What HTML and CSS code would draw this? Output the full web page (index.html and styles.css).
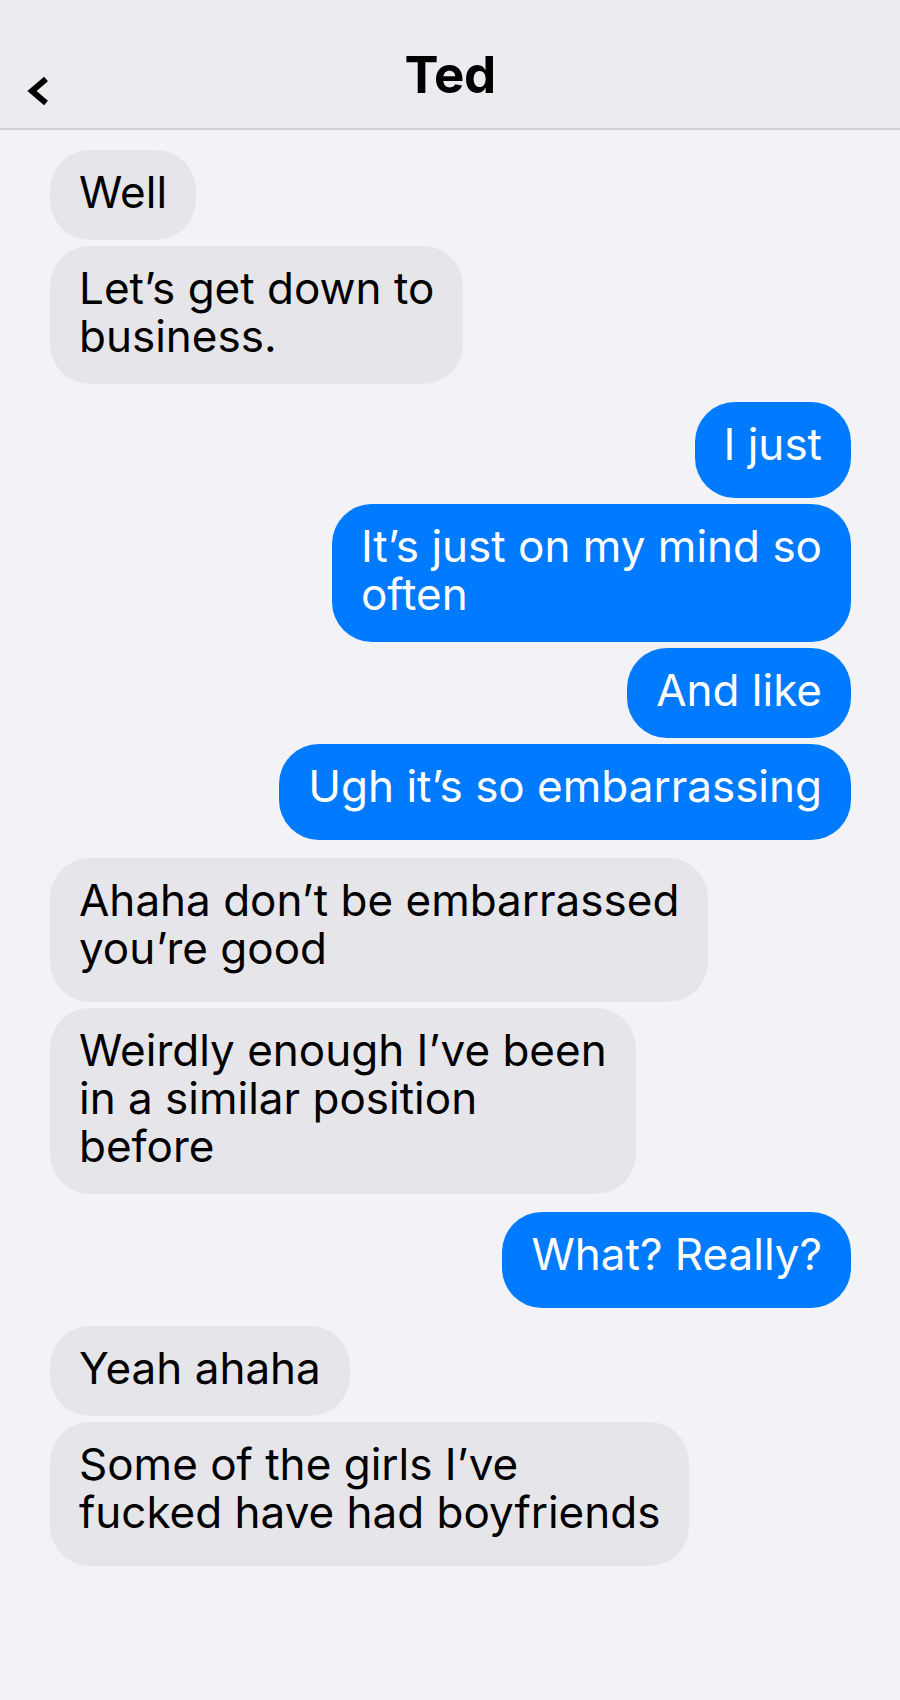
FILE: index.html
```html
<!DOCTYPE html>
<html lang='en'>

<head>
    <meta charset='UTF-8' />
    <meta name='viewport' content='width=device-width, initial-scale=1.0'/>
    <title>Ted</title>
    <link rel="stylesheet" href="styles.css">
</head>
<body>
    <header class='topbar'>
        <a class='back' href='#'>
            <svg width='22' height='30' viewBox='0 0 22 30'>
                <polyline points='19,3 5,15 19,27' fill='none' stroke='#000' stroke-width='6' stroke-linejoin='miter' />
            </svg>
        </a>
        <h1>Ted</h1>
        <span></span>
    </header>

    <div class='thread'>
        <div class='msg them'>Well</div>
        <div class='msg them'>Let’s get down to<br>business.</div>
        <div class='msg me low'>I just</div>
        <div class='msg me'>It’s just on my mind so<br>often</div>
        <div class='msg me'>And like</div>
        <div class='msg me low'>Ugh it’s so embarrassing</div>
        <div class='msg them low'>Ahaha don’t be embarrassed<br>you’re good</div>
        <div class='msg them'>Weirdly enough I’ve been<br>in a similar position<br>before</div>
        <div class='msg me low'>What? Really?</div>
        <div class='msg them'>Yeah ahaha</div>
        <div class='msg them low'>Some of the girls I’ve<br>fucked have had boyfriends</div>
    </div>
</body>
</html>
```

FILE: styles.css
```css
:root {
    --bg: #f2f2f7;
    --bar: #ebebf0;
    --line: #d1d1d6;
    --gray: #e5e5ea;
    --blue: #007aff;
}
body {
    font-family: Inter, 'Noto Sans', sans-serif;
    margin: 0;
    background: var(--bg);
    color: #000;
}
.topbar {
    display: grid;
    grid-template-columns: 1fr auto 1fr;
    align-items: start;
    height: 128px;
    background: var(--bar);
    border-bottom: 2px solid var(--line);
}
.back {
    justify-self: start;
    margin: 76px 0 0 27px;
    display: flex;
}
h1 {
    margin: 49px 0 0;
    font-size: 51px;
    line-height: 51px;
    font-weight: 700;
    letter-spacing: -0.5px;
}
.thread {
    display: flex;
    flex-direction: column;
    align-items: flex-start;
    padding: 20px 49px 40px 50px;
}
.msg {
    font-size: 44px;
    line-height: 48px;
    padding: 18px 29px 24px;
    border-radius: 40px;
    margin-top: 6px;
}
.msg:first-child {
    margin-top: 0;
}
.msg.low {
    padding-bottom: 30px;
}
.them {
    background: var(--gray);
}
.me {
    align-self: flex-end;
    background: var(--blue);
    color: #fff;
}
.them + .me, .me + .them {
    margin-top: 18px;
}
```
